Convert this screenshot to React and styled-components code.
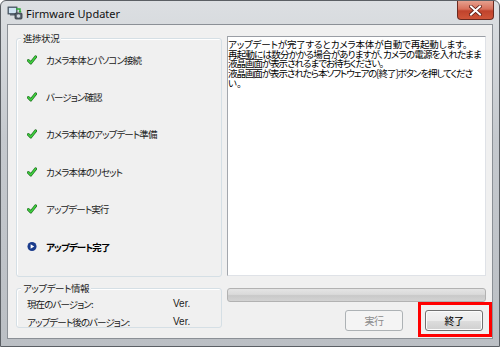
import React from "react";
import styled, { createGlobalStyle } from "styled-components";

const GlobalStyle = createGlobalStyle`
  html, body {
    margin: 0;
    padding: 0;
    background: #ffffff;
  }
  body {
    font-family: "Noto Sans CJK JP", "Noto Sans", sans-serif;
  }
`;

const jp = `
  font-family: "Noto Sans CJK JP", sans-serif;
  font-feature-settings: "palt";
  font-size: 10px;
  letter-spacing: -0.55px;
  color: #1a1a1a;
`;

// left panel text is a bit smaller and tighter than the message box
const jpSmall = `
  ${jp}
  font-size: 9.5px;
  letter-spacing: -0.9px;
`;

const Window = styled.div`
  width: 500px;
  height: 347px;
  box-sizing: border-box;
  display: flex;
  flex-direction: column;
  border: 1px solid #5b5f64;
  border-radius: 6px 6px 0 0;
  background: linear-gradient(180deg, #dcdfe2 0%, #c5c9ce 40%, #bbbfc4 100%);
  overflow: hidden;
`;

const TitleBar = styled.div`
  height: 23px;
  display: flex;
  align-items: center;
  padding-left: 6px;
  gap: 3px;
  position: relative;
`;

const TitleText = styled.span`
  font-family: "Noto Sans", sans-serif;
  font-size: 11px;
  color: #111;
  margin-top: 1px;
`;

const CloseButton = styled.div`
  position: absolute;
  top: 0;
  right: 5px;
  width: 37px;
  height: 19px;
  box-sizing: border-box;
  border: 1px solid #6b2a20;
  border-top: none;
  border-radius: 0 0 4px 4px;
  background: linear-gradient(180deg, #e6a08e 0%, #d8705b 45%, #c0432c 55%, #cf5539 100%);
  display: flex;
  align-items: center;
  justify-content: center;
`;

const FrameBody = styled.div`
  flex: 1;
  padding: 0 6px 7px 6px;
  display: flex;
`;

const Client = styled.div`
  flex: 1;
  box-sizing: border-box;
  border: 1px solid #8b9096;
  background: #f0f0f0;
  display: flex;
  padding: 11px 6px 0 8px;
`;

const LeftColumn = styled.div`
  width: 206px;
  margin-top: 2px;
  display: flex;
  flex-direction: column;
  gap: 11px;
`;

const Group = styled.div`
  position: relative;
  box-sizing: border-box;
  height: ${(p) => p.$h}px;
  border: 1px solid #d5dfe5;
  border-radius: 3px;
  box-shadow: inset 1px 1px 0 #ffffff;
`;

const Legend = styled.span`
  ${jp}
  font-size: 9.5px;
  letter-spacing: -0.45px;
  position: absolute;
  top: -7px;
  left: 4px;
  padding: 0 2px;
  background: #f0f0f0;
  line-height: 12px;
`;

const StepList = styled.div`
  display: flex;
  flex-direction: column;
  padding-top: 2px;
`;

const Step = styled.div`
  height: 37.4px;
  display: flex;
  align-items: center;
  padding-left: 10px;
  gap: 9px;
`;

const StepIcon = styled.span`
  width: 10px;
  height: 10px;
  display: flex;
  align-items: center;
  justify-content: center;
`;

const StepLabel = styled.span`
  ${jpSmall}
  font-weight: ${(p) => (p.$current ? 700 : 400)};
  color: ${(p) => (p.$current ? "#000" : "#222")};
`;

const InfoRows = styled.div`
  display: flex;
  flex-direction: column;
  padding: 6px 0 0 10px;
`;

const InfoRow = styled.div`
  height: 17.7px;
  display: flex;
  align-items: center;
`;

const InfoLabel = styled.span`
  ${jpSmall}
  width: 146px;
`;

const InfoValue = styled.span`
  font-family: "Liberation Sans", sans-serif;
  font-size: 10px;
  color: #222;
`;

const RightColumn = styled.div`
  width: 259px;
  margin-left: 5px;
  display: flex;
  flex-direction: column;
`;

const MessageBox = styled.div`
  ${jp}
  font-size: 9.5px;
  color: #000;
  height: 240px;
  box-sizing: border-box;
  background: #ffffff;
  border-top: 1px solid #9a9ea5;
  border-left: 1px solid #a3a7ad;
  border-right: 1px solid #dfe2e7;
  border-bottom: 1px solid #dfe2e7;
  padding: 3px 0 0 0;
  line-height: 9.65px;
`;

const MessageLine = styled.div`
  white-space: nowrap;
  letter-spacing: ${(p) => p.$spacing}px;
`;

const Progress = styled.div`
  margin-top: 12px;
  height: 14px;
  box-sizing: border-box;
  border: 1px solid #b2b2b2;
  border-radius: 3px;
  background: linear-gradient(180deg, #e4e4e4 0%, #dadada 45%, #c9c9c9 55%, #d3d3d3 100%);
`;

const ButtonRow = styled.div`
  margin-top: 8px;
  display: flex;
  justify-content: flex-end;
  gap: 22px;
  padding-right: 3px;
`;

const Highlight = styled.div`
  position: relative;
`;

const RedFrame = styled.div`
  position: absolute;
  left: -7px;
  top: -8px;
  right: -9px;
  bottom: -6px;
  border: 3px solid #ff0000;
  pointer-events: none;
`;

const Button = styled.div`
  ${jp}
  width: 58px;
  height: 21px;
  box-sizing: border-box;
  border-radius: 3px;
  display: flex;
  align-items: center;
  justify-content: center;
  border: 1px solid ${(p) => (p.$disabled ? "#adb2b5" : "#707070")};
  color: ${(p) => (p.$disabled ? "#8b8b8b" : "#000")};
  background: ${(p) =>
    p.$disabled
      ? "#f4f4f4"
      : "linear-gradient(180deg, #f2f2f2 0%, #ebebeb 50%, #dddddd 51%, #cfcfcf 100%)"};
  box-shadow: inset 0 0 0 1px ${(p) => (p.$disabled ? "#f4f4f4" : "#fcfcfc")};
`;

const Check = () => (
  <svg width="11" height="10" viewBox="0 0 11 10">
    <path d="M1.5 5.5 L4.2 8.2 L9.5 1.5" fill="none" stroke="#1f6e1f" strokeWidth="3.2" strokeLinecap="round" strokeLinejoin="round" />
    <path d="M1.5 5.5 L4.2 8.2 L9.5 1.5" fill="none" stroke="#3fcf3f" strokeWidth="1.8" strokeLinecap="round" strokeLinejoin="round" />
  </svg>
);

const Current = () => (
  <svg width="11" height="11" viewBox="0 0 11 11">
    <circle cx="5.5" cy="5.5" r="5" fill="#1b3c8c" />
    <path d="M4 3 L8 5.5 L4 8 Z" fill="#ffffff" />
  </svg>
);

const AppIcon = () => (
  <svg width="16" height="16" viewBox="0 0 16 16">
    <rect x="1" y="2" width="9" height="7" fill="#6f7f8f" stroke="#3a4550" strokeWidth="0.8" />
    <rect x="2" y="3" width="7" height="5" fill="#cfe3f2" />
    <rect x="3" y="9" width="5" height="1.5" fill="#56616c" />
    <rect x="8" y="8" width="7" height="6" rx="1" fill="#5b6470" stroke="#2e353d" strokeWidth="0.8" />
    <circle cx="11.5" cy="11" r="1.8" fill="#cfd6dd" />
    <path d="M9 4 L13 4 L13 7" fill="none" stroke="#2fa83a" strokeWidth="1.5" />
    <path d="M11.5 6 L13 8 L14.5 6 Z" fill="#2fa83a" />
  </svg>
);

const CloseGlyph = () => (
  <svg width="13" height="11" viewBox="0 0 13 11">
    <path d="M2 1.5 L11 9.5 M11 1.5 L2 9.5" stroke="#5a1a12" strokeWidth="3.6" strokeLinecap="square" />
    <path d="M2 1.5 L11 9.5 M11 1.5 L2 9.5" stroke="#ffffff" strokeWidth="2" strokeLinecap="square" />
  </svg>
);

const steps = [
  "カメラ本体とパソコン接続",
  "バージョン確認",
  "カメラ本体のアップデート準備",
  "カメラ本体のリセット",
  "アップデート実行",
  "アップデート完了",
];

// each line is tracked so it ends where the original wraps
const messageLines = [
  { text: "アップデートが完了するとカメラ本体が自動で再起動します。", spacing: -0.15 },
  { text: "再起動には数分かかる場合がありますが、カメラの電源を入れたまま", spacing: -0.78 },
  { text: "液晶画面が表示されるまでお待ちください。", spacing: -1.03 },
  { text: "液晶画面が表示されたら本ソフトウェアの[終了]ボタンを押してくださ", spacing: -1.06 },
  { text: "い。", spacing: -0.15 },
];

const App = () => {
  const currentStep = steps.length - 1;

  return (
    <>
      <GlobalStyle />
      <Window>
        <TitleBar>
          <AppIcon />
          <TitleText>Firmware Updater</TitleText>
          <CloseButton>
            <CloseGlyph />
          </CloseButton>
        </TitleBar>
        <FrameBody>
          <Client>
            <LeftColumn>
              <Group $h={239}>
                <Legend>進捗状況</Legend>
                <StepList>
                  {steps.map((step, i) => (
                    <Step key={step}>
                      <StepIcon>{i === currentStep ? <Current /> : <Check />}</StepIcon>
                      <StepLabel $current={i === currentStep}>{step}</StepLabel>
                    </Step>
                  ))}
                </StepList>
              </Group>
              <Group $h={40}>
                <Legend>アップデート情報</Legend>
                <InfoRows>
                  <InfoRow>
                    <InfoLabel>現在のバージョン:</InfoLabel>
                    <InfoValue>Ver.</InfoValue>
                  </InfoRow>
                  <InfoRow>
                    <InfoLabel>アップデート後のバージョン:</InfoLabel>
                    <InfoValue>Ver.</InfoValue>
                  </InfoRow>
                </InfoRows>
              </Group>
            </LeftColumn>
            <RightColumn>
              <MessageBox>
                {messageLines.map((line) => (
                  <MessageLine key={line.text} $spacing={line.spacing}>
                    {line.text}
                  </MessageLine>
                ))}
              </MessageBox>
              <Progress />
              <ButtonRow>
                <Button $disabled>実行</Button>
                <Highlight>
                  <Button>終了</Button>
                  <RedFrame />
                </Highlight>
              </ButtonRow>
            </RightColumn>
          </Client>
        </FrameBody>
      </Window>
    </>
  );
};

export default App;
